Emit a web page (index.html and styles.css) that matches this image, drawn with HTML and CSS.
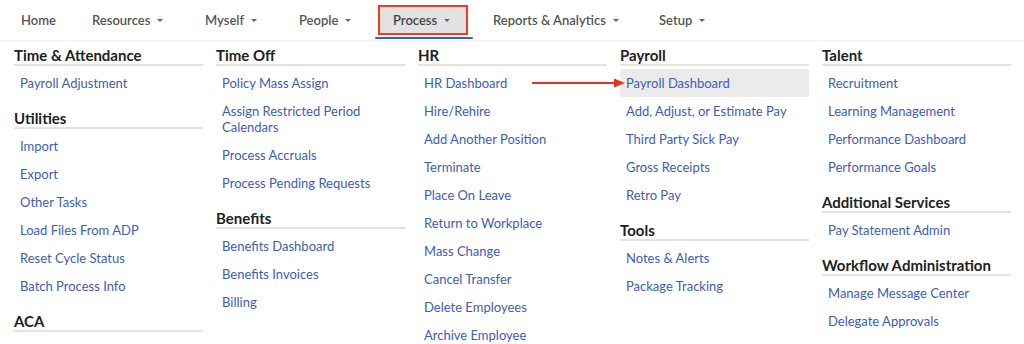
FILE: index.html
```html
<!DOCTYPE html>
<html>
<head>
<meta charset="utf-8">
<link rel="stylesheet" href="styles.css">
</head>
<body>
<nav class="topnav">
  <div class="nav-item home">Home</div>
  <div class="nav-item res">Resources<span class="caret"></span></div>
  <div class="nav-item my">Myself<span class="caret"></span></div>
  <div class="nav-item ppl">People<span class="caret"></span></div>
  <div class="nav-item proc active">Process<span class="caret"></span></div>
  <div class="nav-item rep">Reports &amp; Analytics<span class="caret"></span></div>
  <div class="nav-item setup">Setup<span class="caret"></span></div>
</nav>
<div class="menu">
  <div class="col">
    <h3>Time &amp; Attendance</h3>
    <a>Payroll Adjustment</a>
    <h3>Utilities</h3>
    <a>Import</a>
    <a>Export</a>
    <a>Other Tasks</a>
    <a>Load Files From ADP</a>
    <a>Reset Cycle Status</a>
    <a>Batch Process Info</a>
    <h3>ACA</h3>
  </div>
  <div class="col">
    <h3>Time Off</h3>
    <a>Policy Mass Assign</a>
    <a>Assign Restricted Period Calendars</a>
    <a>Process Accruals</a>
    <a>Process Pending Requests</a>
    <h3>Benefits</h3>
    <a>Benefits Dashboard</a>
    <a>Benefits Invoices</a>
    <a>Billing</a>
  </div>
  <div class="col">
    <h3>HR</h3>
    <a>HR Dashboard</a>
    <a>Hire/Rehire</a>
    <a>Add Another Position</a>
    <a>Terminate</a>
    <a>Place On Leave</a>
    <a>Return to Workplace</a>
    <a>Mass Change</a>
    <a>Cancel Transfer</a>
    <a>Delete Employees</a>
    <a>Archive Employee</a>
  </div>
  <div class="col">
    <h3>Payroll</h3>
    <a class="hl">Payroll Dashboard</a>
    <a>Add, Adjust, or Estimate Pay</a>
    <a>Third Party Sick Pay</a>
    <a>Gross Receipts</a>
    <a>Retro Pay</a>
    <h3>Tools</h3>
    <a>Notes &amp; Alerts</a>
    <a>Package Tracking</a>
  </div>
  <div class="col">
    <h3>Talent</h3>
    <a>Recruitment</a>
    <a>Learning Management</a>
    <a>Performance Dashboard</a>
    <a>Performance Goals</a>
    <h3>Additional Services</h3>
    <a>Pay Statement Admin</a>
    <h3>Workflow Administration</h3>
    <a>Manage Message Center</a>
    <a>Delegate Approvals</a>
  </div>
  <svg class="arrow" width="94" height="10" viewBox="0 0 94 10">
    <line x1="0" y1="5" x2="84" y2="5" stroke="#e8321e" stroke-width="2"/>
    <polygon points="82,0.5 93,5 82,9.5" fill="#e8321e"/>
  </svg>
</div>
</body>
</html>
```
FILE: styles.css
```css
* { box-sizing: border-box; }
html, body { margin: 0; padding: 0; background: #fff; }
body {
  font-family: Lato, "Open Sans", "Liberation Sans", sans-serif;
  width: 1024px;
  height: 344px;
  overflow: hidden;
}
.topnav {
  height: 40px;
  display: flex;
  align-items: center;
  padding-left: 21px;
  background: #fff;
  box-shadow: 0 1px 2px rgba(0,0,0,0.08);
  position: relative;
  z-index: 1;
}
.nav-item {
  font-size: 13px;
  font-weight: 600;
  color: #555;
  display: flex;
  align-items: center;
  height: 30px;
  flex: none;
}
.caret {
  display: inline-block;
  width: 0; height: 0;
  border-left: 3px solid transparent;
  border-right: 3px solid transparent;
  border-top: 3.5px solid #666;
  margin-left: 7px;
}
.home { width: 71px; }
.res { width: 113px; }
.my { width: 94px; }
.ppl { width: 79px; }
.proc { width: 90px; margin-right: 25px; }
.rep { width: 166px; }
.setup { width: 80px; }
.nav-item.active {
  background: #e2e2e2;
  border: 2px solid #f03a22;
  padding: 0 0 0 13px;
  color: #444;
  position: relative;
}
.nav-item.active::after {
  content: "";
  position: absolute;
  left: -5px; right: -7px;
  bottom: -6px;
  height: 2px;
  background: #3a5fc4;
  border-radius: 1px;
}
.menu {
  position: relative;
  margin: 0 12px 0 4px;
  padding: 6px 0 0 10px;
  display: grid;
  grid-template-columns: repeat(5, 189px);
  column-gap: 13px;
  align-items: start;
  background: #fff;
}
.col { display: flex; flex-direction: column; }
.col h3 {
  margin: 12px 0 3px;
  font-size: 15px;
  line-height: 18px;
  font-weight: 700;
  color: #222;
  border-bottom: 2px solid #e6e2dd;
  padding-bottom: 0;
}
.col h3:first-child { margin-top: 0; }
.col a {
  display: block;
  font-size: 13px;
  line-height: 16px;
  padding: 6px 6px;
  color: #3e5cb8;
  border-radius: 3px;
}
.col a.hl { background: #ebebeb; }
.arrow {
  position: absolute;
  left: 528px;
  top: 38px;
}
```
